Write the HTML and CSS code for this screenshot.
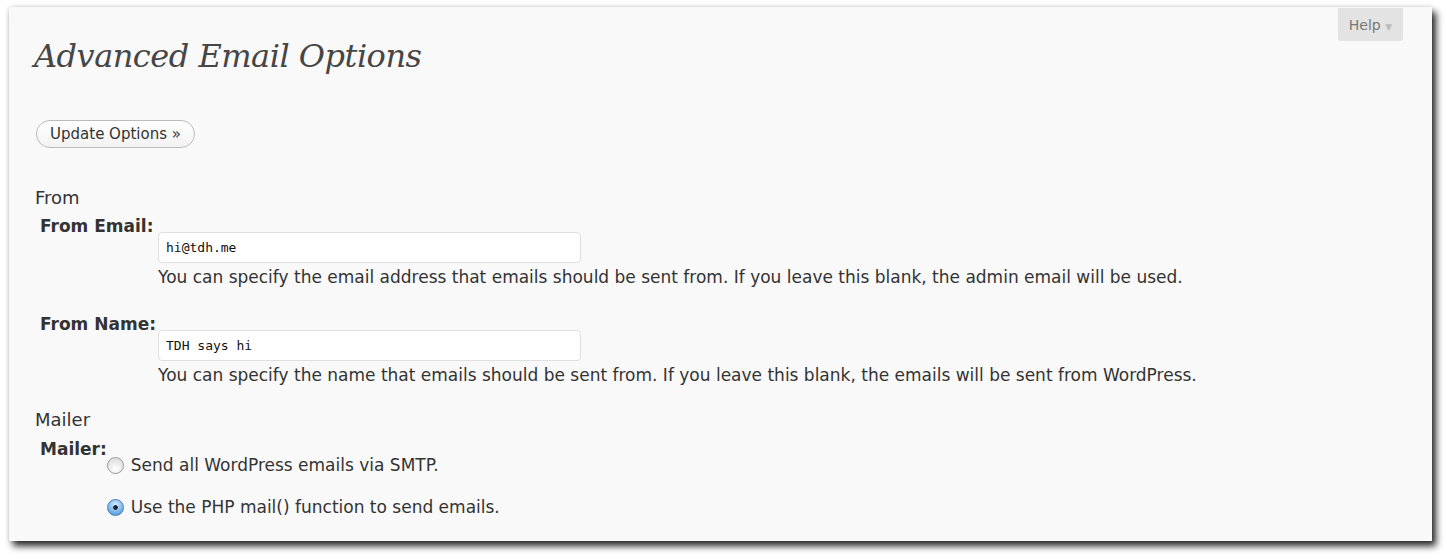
FILE: index.html
```html
<!DOCTYPE html>
<html lang="en">
<head>
  <meta charset="UTF-8">
  <title>Advanced Email Options</title>
  <link rel="stylesheet" href="styles.css">
</head>
<body>

  <div class="wrap">
    <button class="help-tab">Help <span class="arrow">▼</span></button>

    <h2>Advanced Email Options</h2>

    <form>
      <button type="button" class="update">Update Options &raquo;</button>

      <h3>From</h3>
      <div class="option">
        <label class="label">From Email:</label>
        <div class="field">
          <input type="text" value="hi@tdh.me">
          <p class="desc">You can specify the email address that emails should be sent from. If you leave this blank, the admin email will be used.</p>
        </div>
      </div>
      <div class="option second">
        <label class="label">From Name:</label>
        <div class="field">
          <input type="text" value="TDH says hi">
          <p class="desc">You can specify the name that emails should be sent from. If you leave this blank, the emails will be sent from WordPress.</p>
        </div>
      </div>

      <h3 class="mailer-head">Mailer</h3>
      <div class="option mailer">
        <label class="label">Mailer:</label>
        <div class="radios">
          <label class="radio"><span class="dot"></span>Send all WordPress emails via SMTP.</label>
          <label class="radio"><span class="dot checked"></span>Use the PHP mail() function to send emails.</label>
        </div>
      </div>
    </form>
  </div>

</body>
</html>
```

FILE: styles.css
```css
body {
  margin: 0;
  padding-bottom: 18px;
  background: #fff;
  font-family: 'DejaVu Sans', sans-serif;
  font-size: 17px;
  line-height: 20px;
  color: #333;
}
.wrap {
  position: relative;
  margin: 7px 0 0 9px;
  width: 1423px;
  height: 534px;
  box-sizing: border-box;
  padding: 29px 0 0 25px;
  background: #f9f9f9;
  box-shadow: 4px 5px 7px rgba(0,0,0,0.85), 0 0 4px rgba(0,0,0,0.15);
}
.help-tab {
  position: absolute;
  top: 1px;
  right: 29px;
  width: 65px;
  height: 33px;
  border: none;
  border-radius: 0 0 3px 3px;
  background: #e3e3e3;
  color: #777;
  font-family: 'DejaVu Sans', sans-serif;
  font-size: 14px;
  padding: 0;
}
.help-tab .arrow {
  color: #bbb;
  font-size: 9px;
}
h2 {
  margin: 0;
  font-family: 'DejaVu Serif', serif;
  font-style: italic;
  font-weight: normal;
  font-size: 32px;
  line-height: 40px;
  color: #464646;
  letter-spacing: -0.5px;
}
.update {
  display: block;
  margin: 44px 0 0 2px;
  width: 159px;
  height: 28px;
  border: 1px solid #bbb;
  border-radius: 14px;
  background: linear-gradient(#fff, #f2f2f2);
  color: #333;
  font-family: 'DejaVu Sans', sans-serif;
  font-size: 15px;
  padding: 0;
}
h3 {
  margin: 40px 0 0 1px;
  font-size: 18px;
  line-height: 20px;
  font-weight: normal;
  color: #333;
}
.option {
  display: flex;
  margin: 8px 0 0 6px;
}
.option.second {
  margin-top: 27px;
}
.label {
  font-weight: bold;
  width: 118px;
  flex-shrink: 0;
}
.field {
  padding-top: 16px;
}
.field input {
  display: block;
  width: 423px;
  height: 31px;
  box-sizing: border-box;
  border: 1px solid #dfdfdf;
  border-radius: 4px;
  background: #fff;
  padding: 0 7px;
  font-family: 'DejaVu Sans Mono', monospace;
  font-size: 13px;
  color: #111;
}
.desc {
  margin: 4px 0 0;
}
h3.mailer-head {
  margin-top: 25px;
}
.option.mailer {
  margin-top: 9px;
}
.mailer .label {
  width: auto;
}
.radios {
  padding-top: 16px;
}
.radio {
  display: flex;
  align-items: center;
  margin-bottom: 22px;
}
.dot {
  width: 17px;
  height: 17px;
  box-sizing: border-box;
  border: 1px solid #9a9a9a;
  border-radius: 50%;
  background: radial-gradient(circle at 50% 75%, #fff, #d6d6d6);
  margin-right: 7px;
}
.dot.checked {
  border-color: #4a7cb8;
  background: radial-gradient(circle, #1b2533 0 2px, transparent 2.6px), radial-gradient(circle at 50% 30%, #d4ecff, #6aa9e6 70%, #3f82c9);
}
```
